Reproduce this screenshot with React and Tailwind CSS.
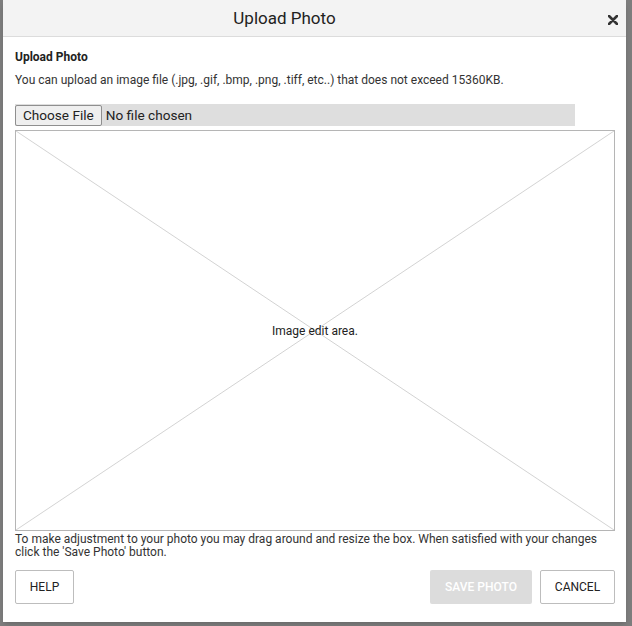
import React from "react";

const App = () => {
  return (
    <div className="w-[632px] h-[626px] bg-[#7d7d7d] overflow-hidden font-['Roboto',sans-serif]">
      <div className="ml-[3px] w-[623px] h-[622px] bg-white flex flex-col shadow-md">
        <div className="h-[37px] shrink-0 bg-[#f3f3f3] border-b border-[#dcdcdc] flex items-center relative">
          <h2 className="w-full text-center pr-[60px] text-[17px] text-[#222] pt-[1px]">Upload Photo</h2>
          <button className="absolute right-[6px] top-[13px] w-[14px] h-[14px] flex items-center justify-center">
            <svg width="10" height="10" viewBox="0 0 10 10">
              <path d="M1 1 L9 9 M9 1 L1 9" stroke="#333" strokeWidth="2.6" strokeLinecap="round" />
            </svg>
          </button>
        </div>

        <div className="px-[12px] flex flex-col flex-1">
          <h3 className="mt-[12px] text-[12px] font-bold text-[#222] leading-[16px]">Upload Photo</h3>
          <p className="mt-[7px] text-[12px] text-[#333] leading-[16px]">
            You can upload an image file (.jpg, .gif, .bmp, .png, .tiff, etc..) that does not exceed 15360KB.
          </p>

          <div className="mt-[16px] w-[560px] h-[22px] bg-[#dedede] flex items-center">
            <span className="h-[21px] px-[7px] border border-[#8f8f8f] rounded-[2px] bg-[#efefef] text-[13.6px] text-[#222] flex items-center">
              Choose File
            </span>
            <span className="ml-[4px] text-[13.6px] text-[#222]">No file chosen</span>
          </div>

          <div className="mt-[4px] w-[600px] h-[401px] border border-[#b5b5b5] relative flex items-center justify-center">
            <svg className="absolute inset-0" width="598" height="399" viewBox="0 0 598 399">
              <line x1="0" y1="0" x2="598" y2="399" stroke="#c8c8c8" strokeWidth="0.8" />
              <line x1="598" y1="0" x2="0" y2="399" stroke="#c8c8c8" strokeWidth="0.8" />
            </svg>
            <span className="relative text-[12px] text-[#222]">Image edit area.</span>
          </div>

          <p className="mt-[2px] text-[12px] text-[#333] leading-[13px] w-[600px]">
            To make adjustment to your photo you may drag around and resize the box. When satisfied with your changes click the 'Save Photo' button.
          </p>

          <div className="mt-[11px] flex items-center w-[600px]">
            <button className="h-[34px] w-[59px] border border-[#bdbdbd] rounded-[2px] text-[12px] text-[#222] bg-white">
              HELP
            </button>
            <button className="ml-auto h-[34px] w-[102px] rounded-[2px] bg-[#dcdcdc] text-[12px] font-medium text-white">
              SAVE PHOTO
            </button>
            <button className="ml-[8px] h-[34px] w-[75px] border border-[#bdbdbd] rounded-[2px] text-[12px] text-[#222] bg-white">
              CANCEL
            </button>
          </div>
        </div>
      </div>
    </div>
  );
};

export default App;
